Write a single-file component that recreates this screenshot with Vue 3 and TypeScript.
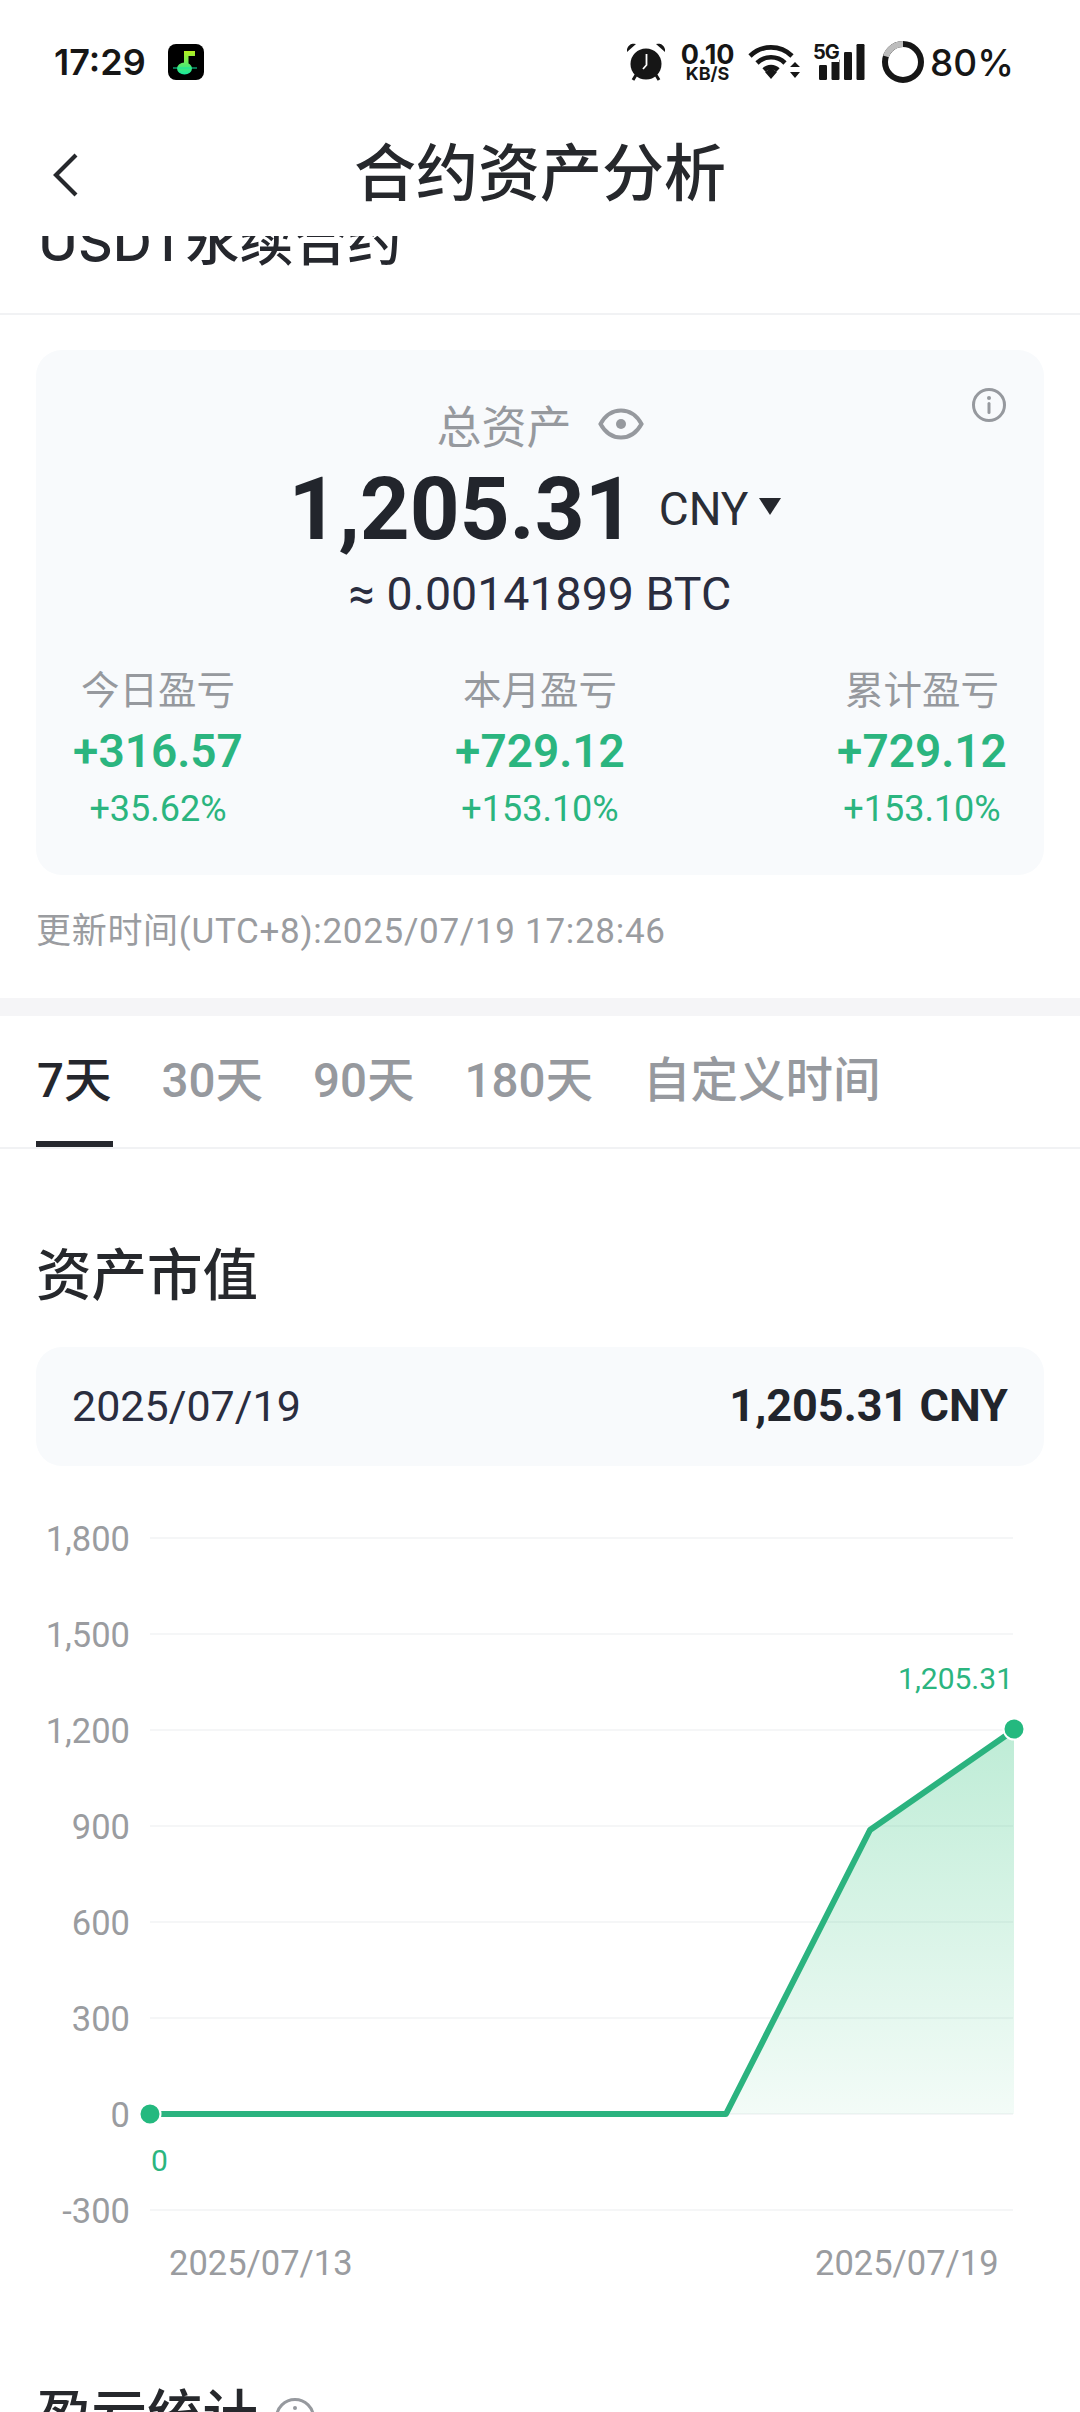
<script setup lang="ts">
const stats = [
  { label: '今日盈亏', value: '+316.57', pct: '+35.62%' },
  { label: '本月盈亏', value: '+729.12', pct: '+153.10%' },
  { label: '累计盈亏', value: '+729.12', pct: '+153.10%' },
]
const tabs = ['7天', '30天', '90天', '180天', '自定义时间']
const ticks = [
  { label: '1,800', y: 72 },
  { label: '1,500', y: 168 },
  { label: '1,200', y: 264 },
  { label: '900', y: 360 },
  { label: '600', y: 456 },
  { label: '300', y: 552 },
  { label: '0', y: 648 },
  { label: '-300', y: 744 },
]
</script>

<template>
  <div class="page">
    <header class="top">
      <div class="status">
        <span class="time">17:29</span>
        <svg class="appicon" width="36" height="36" viewBox="0 0 36 36">
          <defs>
            <linearGradient id="note" gradientUnits="userSpaceOnUse" x1="0" y1="7" x2="0" y2="31">
              <stop offset="0" stop-color="#b6f01e" />
              <stop offset="1" stop-color="#14e6a0" />
            </linearGradient>
          </defs>
          <rect width="36" height="36" rx="8" fill="#000" />
          <path d="M16 7h11v5h-6.500v12h-4.500z" fill="url(#note)" />
          <ellipse cx="16.500" cy="24.500" rx="7.500" ry="6" fill="url(#note)" />
          <path d="M5 24h24" stroke="#14e6a0" stroke-width="1" />
        </svg>
        <span class="spacer"></span>
        <svg class="alarm" width="38" height="38" viewBox="0 0 38 38">
          <circle cx="19" cy="21" r="15.500" fill="#161616" />
          <path d="M0 9a7 7 0 0 1 9-8zM38 9a7 7 0 0 0-9-8z" fill="#161616" />
          <path d="M9 32l-3 5M29 32l3 5" stroke="#161616" stroke-width="3" />
          <path d="M19.500 11v11l-3.500 4" stroke="#fff" stroke-width="1.800" fill="none" />
        </svg>
        <span class="speed"><b>0.10</b><i>KB/S</i></span>
        <svg class="wifi" width="52" height="38" viewBox="0 0 52 38">
          <path d="M2 13a30 30 0 0 1 42 0M9 20a20 20 0 0 1 28 0M16 27a10 10 0 0 1 14 0" stroke="#161616" stroke-width="4.600" fill="none" />
          <path d="M17 29l6-4 6 4-6 7zM42 24l5-5 5 5zM42 29h10l-5 6z" fill="#161616" />
        </svg>
        <span class="signal">
          <svg width="46" height="38" viewBox="0 0 46 38">
            <rect x="0" y="22" width="8" height="15" rx="1.200" fill="#161616" />
            <rect x="12.500" y="16" width="8" height="21" rx="1.200" fill="#161616" />
            <rect x="25" y="9" width="8" height="28" rx="1.200" fill="#161616" />
            <rect x="37.500" y="1" width="8" height="36" rx="1.200" fill="#161616" />
          </svg>
          <span class="fiveg">5G</span>
        </span>
        <svg class="ring" width="44" height="44" viewBox="0 0 44 44">
          <circle cx="22" cy="22" r="18" fill="none" stroke="#161616" stroke-width="6" />
          <path d="M4.900 16.400A18 18 0 0 1 22 4" fill="none" stroke="#bdbdbd" stroke-width="6" />
        </svg>
        <span class="batt">80%</span>
      </div>
      <nav class="nav">
        <svg class="back" width="28" height="44" viewBox="0 0 28 44">
          <path d="M24 2L4 22l20 20" fill="none" stroke="#26282c" stroke-width="4.200" />
        </svg>
        <h1 class="title">合约资产分析</h1>
        <span></span>
      </nav>
    </header>

    <div class="strip"><span class="striptext">USDT永续合约</span></div>

    <section class="summary">
      <div class="card">
        <svg class="info" width="36" height="36" viewBox="0 0 36 36">
          <circle cx="18" cy="18" r="15.500" fill="none" stroke="#96999e" stroke-width="3" />
          <circle cx="18" cy="11" r="2" fill="#96999e" />
          <rect x="16.500" y="15" width="3" height="12" rx="1.500" fill="#96999e" />
        </svg>
        <div class="total">
          <span>总资产</span>
          <svg width="46" height="32" viewBox="0 0 46 32">
            <path d="M2.500 16C8 6 15 2.500 23 2.500S38 6 43.500 16C38 26 31 29.500 23 29.500S8 26 2.500 16z" fill="none" stroke="#96999e" stroke-width="4" />
            <circle cx="23" cy="16" r="5" fill="#96999e" />
          </svg>
        </div>
        <div class="amount">
          <span class="big">1,205.31</span>
          <span class="cur">CNY</span>
          <svg width="22" height="17" viewBox="0 0 22 17"><path d="M0 0h22L11 17z" fill="#25272d" /></svg>
        </div>
        <div class="btc">≈ 0.00141899 BTC</div>
        <div class="stats">
          <div v-for="s in stats" :key="s.label" class="stat">
            <div class="slabel">{{ s.label }}</div>
            <div class="svalue">{{ s.value }}</div>
            <div class="spct">{{ s.pct }}</div>
          </div>
        </div>
      </div>
      <div class="updated">更新时间(UTC+8):2025/07/19 17:28:46</div>
    </section>

    <div class="band"></div>

    <div class="tabs">
      <span v-for="(t, i) in tabs" :key="t" class="tab" :class="{ active: i === 0 }">{{ t }}</span>
    </div>

    <section class="market">
      <h2 class="h2">资产市值</h2>
      <div class="daterow">
        <span class="date">2025/07/19</span>
        <span class="val">1,205.31 CNY</span>
      </div>
    </section>

    <svg class="chart" width="1080" height="860" viewBox="0 0 1080 860">
      <defs>
        <linearGradient id="area" gradientUnits="userSpaceOnUse" x1="0" y1="264" x2="0" y2="648">
          <stop offset="0" stop-color="#34c47f" stop-opacity="0.32" />
          <stop offset="1" stop-color="#34c47f" stop-opacity="0.06" />
        </linearGradient>
      </defs>
      <g v-for="t in ticks" :key="t.label">
        <line x1="150" x2="1013" :y1="t.y" :y2="t.y" stroke="#f2f3f5" stroke-width="1.500" />
        <text x="130" :y="t.y + 13" text-anchor="end" class="axis">{{ t.label }}</text>
      </g>
      <path d="M726 648L870 364L1014 264V648z" fill="url(#area)" />
      <path d="M150 648H726L870 364L1014 264" fill="none" stroke="#2bb37f" stroke-width="6" stroke-linejoin="round" />
      <circle cx="150" cy="648" r="10.500" fill="#24b97f" stroke="#fff" stroke-width="2" />
      <circle cx="1014" cy="263" r="10.500" fill="#24b97f" stroke="#fff" stroke-width="2" />
      <text x="1013" y="223" text-anchor="end" class="pt">1,205.31</text>
      <text x="151" y="705" class="pt">0</text>
      <text x="169" y="809" class="axis">2025/07/13</text>
      <text x="815" y="809" class="axis">2025/07/19</text>
    </svg>

    <div class="profit">
      <span class="h2">盈亏统计</span>
      <svg width="42" height="42" viewBox="0 0 42 42">
        <circle cx="21" cy="21" r="18.500" fill="none" stroke="#96999e" stroke-width="3" />
        <circle cx="21" cy="11" r="2" fill="#96999e" />
      </svg>
    </div>
  </div>
</template>

<style>
html, body { margin: 0; background: #fff; }
</style>

<style scoped>
.page {
  width: 1080px;
  height: 2412px;
  overflow: hidden;
  background: #fff;
  color: #25272d;
  font-family: Roboto, "Noto Sans CJK SC", sans-serif;
}
.top { height: 236px; position: relative; z-index: 1; background: #fff; }
.status {
  height: 108px;
  box-sizing: border-box;
  padding: 16px 66px 0 54px;
  display: flex;
  align-items: center;
  color: #161616;
  font-family: Inter, sans-serif;
}
.time { font-size: 36px; font-weight: 600; width: 114px; }
.appicon { display: block; }
.spacer { flex: 1; }
.alarm { margin-right: 16px; }
.speed { display: flex; flex-direction: column; align-items: center; width: 53px; margin-right: 14px; }
.speed b { font-size: 27px; line-height: 22px; font-weight: 700; }
.speed i { font-size: 18px; line-height: 15px; font-weight: 700; font-style: normal; }
.wifi { margin-right: 13px; }
.signal { position: relative; display: block; width: 52px; height: 38px; margin-right: 16px; }
.signal svg { position: absolute; left: 6px; top: 0; }
.fiveg { position: absolute; left: 0; top: -1px; font-size: 20px; line-height: 20px; font-weight: 700; background: #fff; letter-spacing: -1px; }
.ring { margin-right: 5px; }
.batt { font-size: 37px; font-weight: 500; }
.nav {
  height: 128px;
  box-sizing: border-box;
  padding: 6px 52px 0;
  display: grid;
  grid-template-columns: 1fr auto 1fr;
  align-items: center;
}
.back { display: block; }
.title { margin: 0; font-size: 62px; line-height: 80px; font-weight: 500; color: #26282c; }
.strip {
  height: 77px;
  border-bottom: 2px solid #f1f2f4;
  display: flex;
  align-items: flex-end;
  padding-left: 38px;
  font-family: Inter, "Noto Sans CJK SC", sans-serif;
}
.striptext { font-size: 54px; line-height: 64px; font-weight: 500; margin-bottom: 39px; white-space: nowrap; }
.summary { padding: 35px 36px 0; height: 683px; box-sizing: border-box; }
.card {
  position: relative;
  height: 525px;
  box-sizing: border-box;
  padding-top: 44px;
  background: #f8fafc;
  border-radius: 26px;
}
.info { position: absolute; right: 37px; top: 37px; }
.total {
  height: 60px;
  display: flex;
  justify-content: center;
  align-items: center;
  gap: 26px;
  font-size: 45px;
  color: #96999e;
}
.amount { height: 100px; margin-top: 5px; padding-right: 10px; display: flex; justify-content: center; align-items: center; }
.big { font-size: 87px; font-weight: 700; line-height: 100px; color: #22252c; }
.cur { font-size: 46px; margin-left: 24px; color: #2a2d36; }
.amount svg { margin-left: 11px; margin-bottom: 6px; }
.btc { margin-top: 5px; text-align: center; font-size: 46.500px; line-height: 60px; color: #2a2d3f; }
.stats { display: flex; justify-content: space-between; margin-top: 42px; }
.stat { width: 244px; text-align: center; }
.slabel { font-size: 38.500px; line-height: 50px; color: #96999e; }
.svalue { margin-top: 5px; font-size: 46px; line-height: 60px; font-weight: 600; color: #2bb57f; }
.spct { margin-top: 5px; font-size: 36px; line-height: 46px; color: #2bb57f; }
.updated { margin-top: 30px; font-size: 35px; line-height: 54px; letter-spacing: 0.700px; color: #9a9ca0; white-space: nowrap; }
.band { height: 18px; background: #f5f5f7; }
.tabs {
  height: 131px;
  display: flex;
  gap: 48px;
  padding-left: 36px;
  border-bottom: 2px solid #f1f2f4;
}
.tab {
  box-sizing: border-box;
  height: 131px;
  padding: 34px 1px 0;
  font-size: 47.500px;
  line-height: 62px;
  font-weight: 500;
  color: #96999e;
}
.tab.active { color: #25272d; border-bottom: 6px solid #25272d; }
.market { padding: 91px 36px 0; }
.h2 { margin: 0; font-size: 55.500px; line-height: 74px; font-weight: 500; color: #26282c; }
.daterow {
  margin-top: 33px;
  height: 119px;
  box-sizing: border-box;
  padding: 0 36px 2px;
  display: flex;
  justify-content: space-between;
  align-items: center;
  background: #f8fafc;
  border-radius: 26px;
}
.date { font-size: 43px; color: #2a2d3f; }
.val { font-size: 45px; font-weight: 700; color: #22252c; }
.chart { display: block; }
.axis { font-size: 34.500px; fill: #9a9ca0; font-family: Roboto, sans-serif; }
.pt { font-size: 30px; fill: #2bb57f; font-family: Roboto, sans-serif; }
.profit { margin-top: 55px; padding-left: 36px; display: flex; align-items: center; gap: 16px; }
</style>
